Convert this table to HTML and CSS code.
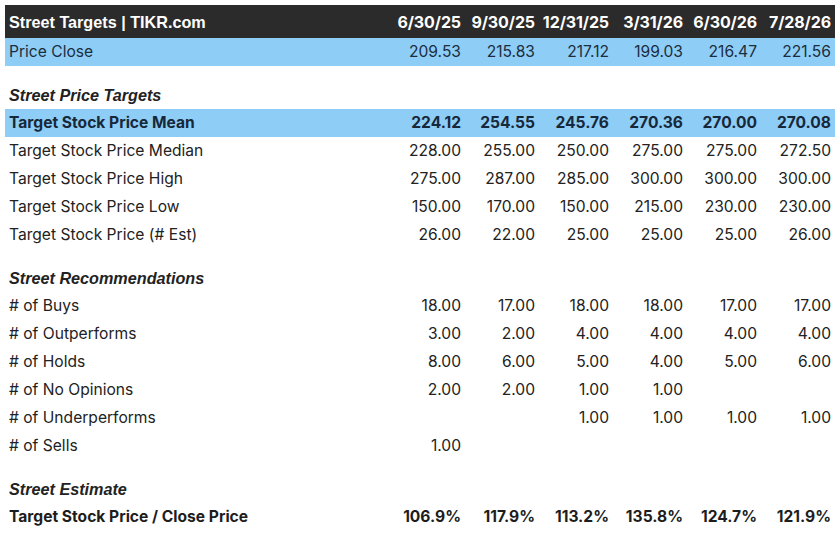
FILE: index.html
```html
<!DOCTYPE html>
<html>
<head>
<meta charset="utf-8">
<link rel="stylesheet" href="styles.css">
</head>
<body>
<div class="wrap">
<table class="t">
<colgroup><col class="c-label"><col class="c-num"><col class="c-num"><col class="c-num"><col class="c-num"><col class="c-num"><col class="c-num"></colgroup>
<thead>
<tr class="head"><th class="lab">Street Targets | TIKR.com</th><th>6/30/25</th><th>9/30/25</th><th>12/31/25</th><th>3/31/26</th><th>6/30/26</th><th>7/28/26</th></tr>
</thead>
<tbody>
<tr class="blue"><td class="lab">Price Close</td><td>209.53</td><td>215.83</td><td>217.12</td><td>199.03</td><td>216.47</td><td>221.56</td></tr>
<tr class="gap"><td colspan="7"></td></tr>
<tr class="sec"><td class="lab" colspan="7">Street Price Targets</td></tr>
<tr class="blue bold"><td class="lab">Target Stock Price Mean</td><td>224.12</td><td>254.55</td><td>245.76</td><td>270.36</td><td>270.00</td><td>270.08</td></tr>
<tr><td class="lab">Target Stock Price Median</td><td>228.00</td><td>255.00</td><td>250.00</td><td>275.00</td><td>275.00</td><td>272.50</td></tr>
<tr><td class="lab">Target Stock Price High</td><td>275.00</td><td>287.00</td><td>285.00</td><td>300.00</td><td>300.00</td><td>300.00</td></tr>
<tr><td class="lab">Target Stock Price Low</td><td>150.00</td><td>170.00</td><td>150.00</td><td>215.00</td><td>230.00</td><td>230.00</td></tr>
<tr><td class="lab">Target Stock Price (# Est)</td><td>26.00</td><td>22.00</td><td>25.00</td><td>25.00</td><td>25.00</td><td>26.00</td></tr>
<tr class="gap"><td colspan="7"></td></tr>
<tr class="sec"><td class="lab" colspan="7">Street Recommendations</td></tr>
<tr><td class="lab"># of Buys</td><td>18.00</td><td>17.00</td><td>18.00</td><td>18.00</td><td>17.00</td><td>17.00</td></tr>
<tr><td class="lab"># of Outperforms</td><td>3.00</td><td>2.00</td><td>4.00</td><td>4.00</td><td>4.00</td><td>4.00</td></tr>
<tr><td class="lab"># of Holds</td><td>8.00</td><td>6.00</td><td>5.00</td><td>4.00</td><td>5.00</td><td>6.00</td></tr>
<tr><td class="lab"># of No Opinions</td><td>2.00</td><td>2.00</td><td>1.00</td><td>1.00</td><td></td><td></td></tr>
<tr><td class="lab"># of Underperforms</td><td></td><td></td><td>1.00</td><td>1.00</td><td>1.00</td><td>1.00</td></tr>
<tr><td class="lab"># of Sells</td><td>1.00</td><td></td><td></td><td></td><td></td><td></td></tr>
<tr class="gap"><td colspan="7"></td></tr>
<tr class="sec"><td class="lab" colspan="7">Street Estimate</td></tr>
<tr class="bold"><td class="lab">Target Stock Price / Close Price</td><td>106.9%</td><td>117.9%</td><td>113.2%</td><td>135.8%</td><td>124.7%</td><td>121.9%</td></tr>
</tbody>
</table>
</div>
</body>
</html>
```

FILE: styles.css
```css
html, body { margin: 0; padding: 0; background: #ffffff; }
.wrap { padding: 5px 2px 0 5px; }
.t {
  width: 828px;
  border-collapse: collapse;
  table-layout: fixed;
  font-family: "Inter", "Liberation Sans", sans-serif;
  font-size: 15.6px;
  color: #222222;
}
.c-label { width: 386px; }
.c-num { width: 74px; }
.t th, .t td {
  padding: 0 4px 0 0;
  height: 28px;
  text-align: right;
  white-space: nowrap;
  vertical-align: middle;
  line-height: 18px;
}
.t .lab { text-align: left; padding-left: 4px; }
.head th {
  height: 33px;
  background: #2b2b2b;
  color: #ffffff;
  font-family: "Inter", "Liberation Sans", sans-serif;
  font-weight: 700;
  font-size: 16px;
  letter-spacing: -0.1px;
}
.head th.lab {
  font-family: "Liberation Sans", Arial, sans-serif;
  font-size: 16.2px;
  letter-spacing: 0;
}
.blue td { background: #8ecdf6; color: #1b2d3e; }
.bold td { font-weight: 700; color: #1d1d1d; }
.blue.bold td { color: #16283a; }
.gap td { height: 15px; }
.sec td {
  font-family: "Liberation Sans", Arial, sans-serif;
  font-weight: bold;
  font-style: italic;
  font-size: 16.2px;
  color: #222222;
}
```
